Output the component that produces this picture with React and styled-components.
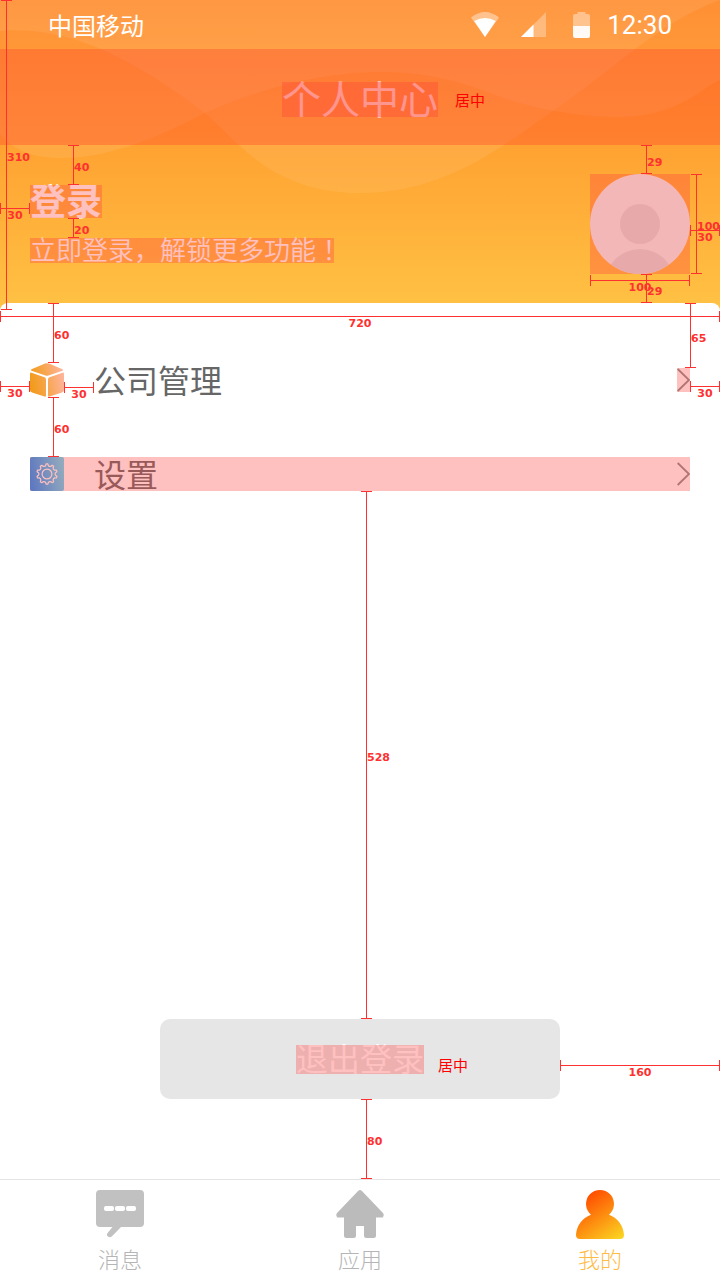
import React from "react";
import styled, { createGlobalStyle, css } from "styled-components";

const GlobalStyle = createGlobalStyle`
  * { box-sizing: border-box; }
  body {
    margin: 0;
    background: #fff;
    font-family: "Noto Sans CJK SC", "Noto Sans", sans-serif;
  }
`;

const RED = "#ff3030";

const tint = css`
  position: relative;
  &::after {
    content: "";
    position: absolute;
    inset: 0;
    background: ${(p) => p.$tint || "rgba(255, 64, 64, 0.33)"};
    pointer-events: none;
  }
`;

const Page = styled.div`
  position: relative;
  min-height: 100vh;
  display: flex;
  flex-direction: column;
  overflow: hidden;
`;

const Header = styled.header`
  position: relative;
  height: 310px;
  background: linear-gradient(#ff8622, #ffc244);
  color: #fff;
`;

const Waves = styled.svg`
  position: absolute;
  inset: 0;
  width: 100%;
  height: 100%;
`;

const StatusBar = styled.div`
  position: relative;
  height: 49px;
  padding: 0 48px;
  display: flex;
  align-items: center;
  justify-content: space-between;
  font-size: 24px;
  line-height: 48px;
`;

const StatusIcons = styled.div`
  display: flex;
  align-items: center;
  svg { display: block; }
`;

const Clock = styled.time`
  margin-left: 17px;
  font: 26px/48px Roboto, sans-serif;
`;

const TitleBar = styled.div`
  ${tint}
  height: 96px;
  padding-bottom: 28px;
  display: flex;
  align-items: flex-end;
  justify-content: center;
`;

const Title = styled.h1`
  ${tint}
  margin: 0;
  padding-bottom: 4px;
  font-size: 39px;
  font-weight: 400;
  line-height: 31px;
`;

const Note = styled.span`
  position: absolute;
  z-index: 1;
  left: 100%;
  bottom: 8px;
  margin-left: ${(p) => p.$gap}px;
  color: #f00;
  font-size: 15px;
  font-weight: 400;
  line-height: 18px;
  white-space: nowrap;
`;

const Profile = styled.section`
  position: relative;
  padding: 0 30px;
  display: flex;
  align-items: flex-start;
  justify-content: space-between;
`;

const Greeting = styled.div`
  padding-top: 40px;
  display: flex;
  flex-direction: column;
  align-items: flex-start;
  gap: 20px;
`;

const LoginTitle = styled.h2`
  ${tint}
  margin: 0;
  padding-bottom: 4px;
  font-size: 36px;
  font-weight: 700;
  line-height: 29px;
`;

const LoginHint = styled.p`
  ${tint}
  margin: 0;
  padding-bottom: 4px;
  font-size: 26px;
  font-weight: 350;
  line-height: 21px;
  &::after { right: 8px; }
`;

const CenteredMark = styled.span`
  font-family: "Noto Sans CJK TC", sans-serif;
`;

const Avatar = styled.div`
  ${tint}
  margin-top: 29px;
  width: 100px;
  height: 100px;
  svg { display: block; }
`;

const Panel = styled.main`
  position: relative;
  flex: 1;
  margin-top: -7px;
  padding: 60px 30px 80px;
  display: flex;
  flex-direction: column;
  justify-content: space-between;
  background: #fff;
  border-radius: 8px 8px 0 0;
`;

const Menu = styled.nav`
  display: flex;
  flex-direction: column;
  gap: 60px;
`;

const MenuRow = styled.a`
  height: 34px;
  display: flex;
  align-items: center;
  color: #666;
  font-size: 32px;
  line-height: 32px;
  text-decoration: none;
  ${(p) => p.$tinted && tint}
  svg { display: block; flex: none; }
`;

const MenuText = styled.span`
  flex: 1;
  margin-left: 30px;
  padding-bottom: 2px;
`;

const Arrow = styled.span`
  height: 24px;
  ${(p) => p.$tinted && tint}
`;

const Logout = styled.button`
  align-self: center;
  width: 400px;
  height: 80px;
  padding: 0;
  display: flex;
  align-items: center;
  justify-content: center;
  border: 0;
  border-radius: 10px;
  background: #e6e6e6;
  color: #fff;
  font-family: inherit;
  font-size: 32px;
`;

const LogoutText = styled.span`
  ${tint}
  padding-bottom: 4px;
  line-height: 25px;
  ${Note} { bottom: 0; }
`;

const TabBar = styled.nav`
  position: relative;
  height: 101px;
  padding-top: 10px;
  display: flex;
  border-top: 1px solid #e5e5e5;
  background: #fff;
`;

const Tab = styled.a`
  flex: 1;
  display: flex;
  flex-direction: column;
  align-items: center;
  color: ${(p) => (p.$active ? "#ffbb44" : "#b5b5b5")};
  font-size: 22px;
  font-weight: 300;
  line-height: 38px;
  text-decoration: none;
  svg { display: block; overflow: visible; }
`;

const Redlines = styled.div`
  position: absolute;
  inset: 0;
  pointer-events: none;
  color: ${RED};
  font: bold 11px/12px "DejaVu Sans", sans-serif;
`;

const px = (v) => (typeof v === "number" ? `${v}px` : v);

const place = css`
  position: absolute;
  left: ${(p) => px(p.$left)};
  right: ${(p) => px(p.$right)};
  top: ${(p) => px(p.$top)};
  bottom: ${(p) => px(p.$bottom)};
  display: flex;
  align-items: center;
  &::before {
    content: "";
    position: absolute;
    background: ${RED};
  }
`;

const VerticalMeasure = styled.div`
  ${place}
  width: 11px;
  height: ${(p) => px(p.$length)};
  border: solid ${RED};
  border-width: 1px 0;
  &::before { left: 5px; top: 0; bottom: 0; width: 1px; }
  span { margin: 6px 0 0 6px; }
`;

const HorizontalMeasure = styled.div`
  ${place}
  height: 11px;
  width: ${(p) => px(p.$length)};
  justify-content: center;
  border: solid ${RED};
  border-width: 0 1px;
  &::before { top: 5px; left: 0; right: 0; height: 1px; }
  span { margin-top: 14px; }
`;

const VERTICAL = [
  { label: 310, $left: 1, $top: 0, $length: 310 },
  { label: 40, $left: 68, $top: 145, $length: 40 },
  { label: 20, $left: 68, $top: 218, $length: 20 },
  { label: 29, $right: 68, $top: 145, $length: 29 },
  { label: 29, $right: 68, $top: 274, $length: 29 },
  { label: 100, $right: 18, $top: 174, $length: 100 },
  { label: 60, $left: 48, $top: 303, $length: 60 },
  { label: 60, $left: 48, $top: 397, $length: 60 },
  { label: 65, $right: 24, $top: 303, $length: 65 },
  { label: 528, $left: "calc(50% + 1px)", $top: 491, $bottom: 261 },
  { label: 80, $left: "calc(50% + 1px)", $bottom: 101, $length: 80 },
];

const HORIZONTAL = [
  { label: 30, $left: 0, $top: 203, $length: 30 },
  { label: 30, $right: 0, $top: 225, $length: 30 },
  { label: 100, $right: 30, $top: 275, $length: 100 },
  { label: 720, $left: 0, $right: 0, $top: 311 },
  { label: 30, $left: 0, $top: 381, $length: 30 },
  { label: 30, $left: 64, $top: 382, $length: 30 },
  { label: 30, $right: 0, $top: 381, $length: 30 },
  { label: 160, $left: "calc(50% + 200px)", $right: 0, $bottom: 209 },
];

const WifiIcon = () => (
  <svg width="28" height="25" viewBox="0 0 28 25" fill="#fff" aria-hidden="true">
    <path d="M0 5.500Q14 -5.500 28 5.500L14 25Z" opacity=".4" />
    <path d="M3.200 9Q14 3 24.800 9L14 25Z" />
  </svg>
);

const SignalIcon = () => (
  <svg width="25" height="25" viewBox="0 0 25 25" fill="#fff" aria-hidden="true">
    <path d="M25 0V25H0Z" opacity=".3" />
    <path d="M12.500 12.500V25H0Z" />
  </svg>
);

const BatteryIcon = () => (
  <svg width="17" height="26" viewBox="0 0 17 26" fill="#fff" aria-hidden="true">
    <path d="M4.500 0H12.500V2H15Q17 2 17 4V14H0V4Q0 2 2 2H4.500Z" opacity=".4" />
    <path d="M0 14H17V24Q17 26 15 26H2Q0 26 0 24Z" opacity=".95" />
  </svg>
);

const IconGroup = styled.span`
  display: flex;
  align-items: center;
  gap: ${(p) => p.$gap}px;
`;

const BoxIcon = () => (
  <svg width="34" height="34" viewBox="0 0 34 34" aria-hidden="true">
    <defs>
      <linearGradient id="box" gradientUnits="userSpaceOnUse" x1="0" y1="20" x2="34" y2="14">
        <stop offset="0" stopColor="#f29a18" />
        <stop offset=".4" stopColor="#f6a445" />
        <stop offset="1" stopColor="#ffb49c" />
      </linearGradient>
    </defs>
    <g fill="url(#box)">
      <path d="M1.500 6.200L15 .5Q17 -.2 19 .5L32.500 6.200Q33.600 7 32.500 7.700L18.500 12.600Q17 13.100 15.500 12.600L1.500 7.700Q.4 7 1.500 6.200Z" />
      <path d="M1.500 9.700L14.500 14.300Q16 14.900 16 16.400V32.500Q16 34 14.500 33.600L2 29.500Q0 28.800 0 27V10.800Q0 9.300 1.500 9.700Z" />
      <path d="M32.500 9.700L19.500 14.300Q18 14.900 18 16.400V32.500Q18 34 19.500 33.600L32 29.500Q34 28.800 34 27V10.800Q34 9.300 32.500 9.700Z" />
    </g>
  </svg>
);

const polar = (radius, degrees) => {
  const a = ((degrees - 90) * Math.PI) / 180;
  return `${(17 + radius * Math.cos(a)).toFixed(2)} ${(17 + radius * Math.sin(a)).toFixed(2)}`;
};

const gearPath =
  Array.from({ length: 10 }, (_, i) => {
    const d = i * 36;
    return `${i ? "L" : "M"}${polar(10.2, d - 5)}L${polar(10.2, d + 5)}L${polar(8.6, d + 9)}Q${polar(7.6, d + 18)} ${polar(8.6, d + 27)}`;
  }).join("") + "Z";

const GearIcon = () => (
  <svg width="34" height="34" viewBox="0 0 34 34" aria-hidden="true">
    <defs>
      <linearGradient id="gear" x1="0" y1=".6" x2="1" y2=".4">
        <stop offset="0" stopColor="#1195ff" />
        <stop offset="1" stopColor="#5cdefb" />
      </linearGradient>
    </defs>
    <rect width="34" height="34" rx="2" fill="url(#gear)" />
    <path d={gearPath} fill="none" stroke="#fff" strokeWidth="1.200" strokeLinejoin="round" />
    <circle cx="17" cy="17" r="4.900" fill="none" stroke="#fff" strokeWidth="1.200" />
  </svg>
);

const Chevron = () => (
  <svg width="13" height="24" viewBox="0 0 13 24" aria-hidden="true">
    <path d="M.7 1L12 12L.7 23" fill="none" stroke="#8c8c8c" strokeWidth="1.800" />
  </svg>
);

const AvatarPicture = () => (
  <svg width="100" height="100" viewBox="0 0 100 100" role="img" aria-label="头像">
    <clipPath id="face"><circle cx="50" cy="50" r="50" /></clipPath>
    <g clipPath="url(#face)">
      <rect width="100" height="100" fill="#eff2f2" />
      <circle cx="50" cy="50" r="20" fill="#dcdddd" />
      <circle cx="50" cy="110" r="35" fill="#dcdddd" />
    </g>
  </svg>
);

const ChatIcon = () => (
  <svg width="48" height="49" viewBox="0 0 48 49" aria-hidden="true">
    <path d="M4 0H44Q48 0 48 4V33Q48 37 44 37H25L16 46.200Q14 48 12 46.600Q10 45 11.600 43L16.500 37H4Q0 37 0 33V4Q0 0 4 0Z" fill="#c1c1c1" />
    <g fill="#fff">
      <rect x="8" y="16" width="10" height="5" rx="2" />
      <rect x="19" y="16" width="10" height="5" rx="2" />
      <rect x="30" y="16" width="10" height="5" rx="2" />
    </g>
  </svg>
);

const HomeIcon = () => (
  <svg width="48" height="49" viewBox="0 0 48 49" aria-hidden="true">
    <path d="M22.300 .8Q24 -.7 25.700 .8L47.200 23.200Q48.700 25.500 47 27.200Q46.500 27.600 45.500 27.600H40V45.500Q40 48 37.500 48H30.500Q28 48 28 45.500V36.500Q28 36 27.500 36H20.500Q20 36 20 36.500V45.500Q20 48 17.500 48H10.500Q8 48 8 45.500V27.600H2.500Q1.500 27.600 1 27.200Q-.7 25.500 .8 23.200Z" fill="#bbb" />
  </svg>
);

const PersonIcon = () => (
  <svg width="48" height="49" viewBox="0 0 48 49" aria-hidden="true">
    <defs>
      <linearGradient id="person" gradientUnits="userSpaceOnUse" x1="13" y1="3" x2="44" y2="49">
        <stop offset="0" stopColor="#ff4b00" />
        <stop offset="1" stopColor="#fbd421" />
      </linearGradient>
    </defs>
    <path d="M15 24.700A14 14 0 1 1 33 24.700C42 28 47.500 36 48 45Q48 49 44 49H4Q0 49 0 45C.5 36 6 28 15 24.700Z" fill="url(#person)" />
  </svg>
);

export default function App() {
  return (
    <Page>
      <GlobalStyle />
      <Header>
        <Waves viewBox="0 0 720 310" preserveAspectRatio="none" aria-hidden="true">
          <g fill="#fff" fillOpacity=".08">
            <path d="M0 31C70 25 135 60 205 113C235 138 270 193 360 193C450 193 510 140 560 106C620 64 660 22 720 0H0Z" />
            <path d="M0 134C15 152 35 158 62 158C115 158 165 133 205 113C270 84 330 72 380 72C455 72 490 96 520 103C555 113 590 117 620 117C680 116 700 88 720 80V0H0Z" />
          </g>
        </Waves>
        <StatusBar>
          <span>中国移动</span>
          <StatusIcons>
            <IconGroup $gap={27}>
              <IconGroup $gap={22}>
                <WifiIcon />
                <SignalIcon />
              </IconGroup>
              <BatteryIcon />
            </IconGroup>
            <Clock>12:30</Clock>
          </StatusIcons>
        </StatusBar>
        <TitleBar $tint="rgba(255, 60, 44, 0.33)">
          <Title>
            个人中心
            <Note $gap={17}>居中</Note>
          </Title>
        </TitleBar>
        <Profile>
          <Greeting>
            <LoginTitle>登录</LoginTitle>
            <LoginHint>立即登录，解锁更多功能<CenteredMark>！</CenteredMark></LoginHint>
          </Greeting>
          <Avatar><AvatarPicture /></Avatar>
        </Profile>
      </Header>

      <Panel>
        <Menu>
          <MenuRow href="#company">
            <BoxIcon />
            <MenuText>公司管理</MenuText>
            <Arrow $tinted><Chevron /></Arrow>
          </MenuRow>
          <MenuRow href="#settings" $tinted>
            <GearIcon />
            <MenuText>设置</MenuText>
            <Arrow><Chevron /></Arrow>
          </MenuRow>
        </Menu>
        <Logout type="button">
          <LogoutText>
            退出登录
            <Note $gap={14}>居中</Note>
          </LogoutText>
        </Logout>
      </Panel>

      <TabBar>
        <Tab href="#messages"><ChatIcon />消息</Tab>
        <Tab href="#apps"><HomeIcon />应用</Tab>
        <Tab href="#mine" $active><PersonIcon />我的</Tab>
      </TabBar>

      <Redlines>
        {VERTICAL.map(({ label, ...rest }, i) => (
          <VerticalMeasure key={i} {...rest}><span>{label}</span></VerticalMeasure>
        ))}
        {HORIZONTAL.map(({ label, ...rest }, i) => (
          <HorizontalMeasure key={i} {...rest}><span>{label}</span></HorizontalMeasure>
        ))}
      </Redlines>
    </Page>
  );
}
